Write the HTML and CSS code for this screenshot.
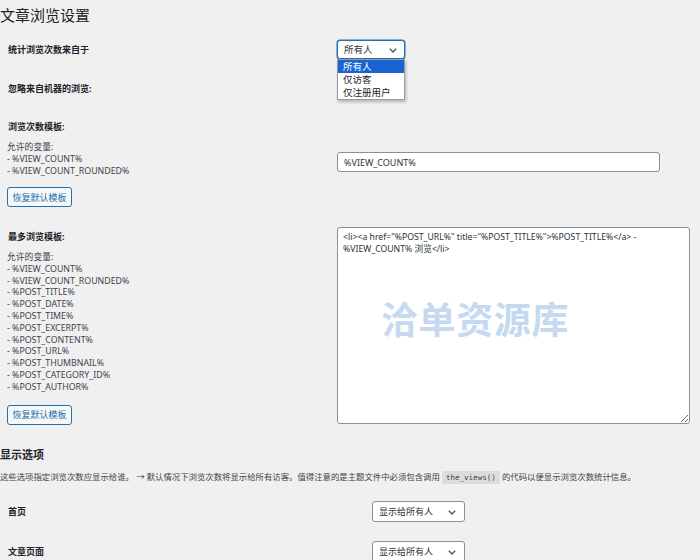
FILE: index.html
```html
<!DOCTYPE html>
<html lang="zh-CN">
<head>
    <meta charset="UTF-8">
    <meta name="viewport" content="width=device-width, initial-scale=1.0">
    <title>文章浏览设置</title>
    <link rel="stylesheet" href="styles.css">
</head>
<body>
    <div class="wrap">
        <h1>文章浏览设置</h1>

        <div class="form">
            <div class="row row-count">
                <div class="th"><span class="label">统计浏览次数来自于</span></div>
                <div class="td">
                    <div class="select-wrap">
                        <div class="select is-open">所有人
                            <svg class="chevron" width="8" height="5" viewBox="0 0 8 5"><path d="M0.8 0.8 L4 4 L7.2 0.8" fill="none" stroke="#50575e" stroke-width="1.4"/></svg>
                        </div>
                        <ul class="dropdown">
                            <li class="active">所有人</li>
                            <li>仅访客</li>
                            <li>仅注册用户</li>
                        </ul>
                    </div>
                </div>
            </div>

            <div class="row row-bots">
                <div class="th"><span class="label">忽略来自机器的浏览:</span></div>
                <div class="td"></div>
            </div>

            <div class="row row-template">
                <div class="th">
                    <span class="label">浏览次数模板:</span>
                    <div class="vars">
                        允许的变量:<br>
                        - %VIEW_COUNT%<br>
                        - %VIEW_COUNT_ROUNDED%
                    </div>
                    <button class="button">恢复默认模板</button>
                </div>
                <div class="td">
                    <input class="text-input" type="text" value="%VIEW_COUNT%">
                </div>
            </div>

            <div class="row row-most">
                <div class="th">
                    <span class="label">最多浏览模板:</span>
                    <div class="vars vars-long">
                        允许的变量:<br>
                        - %VIEW_COUNT%<br>
                        - %VIEW_COUNT_ROUNDED%<br>
                        - %POST_TITLE%<br>
                        - %POST_DATE%<br>
                        - %POST_TIME%<br>
                        - %POST_EXCERPT%<br>
                        - %POST_CONTENT%<br>
                        - %POST_URL%<br>
                        - %POST_THUMBNAIL%<br>
                        - %POST_CATEGORY_ID%<br>
                        - %POST_AUTHOR%
                    </div>
                    <button class="button">恢复默认模板</button>
                </div>
                <div class="td">
                    <div class="area-wrap">
                        <textarea class="textarea">&lt;li&gt;&lt;a href="%POST_URL%" title="%POST_TITLE%"&gt;%POST_TITLE%&lt;/a&gt; -
%VIEW_COUNT% 浏览&lt;/li&gt;</textarea>
                        <div class="watermark">洽单资源库</div>
                    </div>
                </div>
            </div>
        </div>

        <h2>显示选项</h2>
        <p class="desc">这些选项指定浏览次数应显示给谁。 → 默认情况下浏览次数将显示给所有访客。值得注意的是主题文件中必须包含调用 <code>the_views()</code> 的代码以便显示浏览次数统计信息。</p>

        <div class="form form-display">
            <div class="row row-home">
                <div class="th"><span class="label">首页</span></div>
                <div class="td">
                    <div class="select select-wide">显示给所有人
                        <svg class="chevron" width="8" height="5" viewBox="0 0 8 5"><path d="M0.8 0.8 L4 4 L7.2 0.8" fill="none" stroke="#50575e" stroke-width="1.4"/></svg>
                    </div>
                </div>
            </div>
            <div class="row row-single">
                <div class="th"><span class="label">文章页面</span></div>
                <div class="td">
                    <div class="select select-wide">显示给所有人
                        <svg class="chevron" width="8" height="5" viewBox="0 0 8 5"><path d="M0.8 0.8 L4 4 L7.2 0.8" fill="none" stroke="#50575e" stroke-width="1.4"/></svg>
                    </div>
                </div>
            </div>
        </div>
    </div>
</body>
</html>
```

FILE: styles.css
```css
body {
    margin: 0;
    background: #f0f0f1;
    color: #1d2327;
    font-family: "Noto Sans", "Noto Sans CJK SC", sans-serif;
    font-size: 9px;
    overflow: hidden;
}
.wrap {
    padding: 5px 0 0 0;
}
h1 {
    margin: 0;
    font-size: 15px;
    line-height: 20px;
    font-weight: 400;
    color: #1d2327;
}
.form {
    display: flex;
    flex-direction: column;
}
.row {
    display: grid;
    grid-template-columns: 337px 1fr;
}
.th {
    padding-left: 7px;
    display: flex;
    flex-direction: column;
    align-items: flex-start;
}
.label {
    font-weight: 700;
    line-height: 19px;
    padding-left: 1px;
}
.row-count {
    margin-top: 15px;
    position: relative;
    z-index: 2;
}
.row-bots {
    margin-top: 20px;
}
.row-template {
    margin-top: 19px;
}
.row-most {
    margin-top: 20px;
}
.vars {
    margin-top: 5px;
    font-size: 8.8px;
    line-height: 12px;
    color: #3c434a;
}
.vars-long {
    margin-top: 6px;
    line-height: 11.8px;
}
.button {
    margin-top: 10px;
    width: 65px;
    height: 20px;
    padding: 0;
    border: 1px solid #2271b1;
    border-radius: 3px;
    background: #f6f7f7;
    color: #2271b1;
    font-family: inherit;
    font-size: 9px;
}
.row-most .button {
    margin-top: 11px;
}

/* selects */
.select-wrap {
    position: relative;
    width: 68px;
}
.select {
    box-sizing: border-box;
    position: relative;
    height: 19px;
    width: 68px;
    padding-left: 6px;
    line-height: 17px;
    background: #fff;
    border: 1px solid #8c8f94;
    border-radius: 3px;
    color: #2c3338;
    font-size: 9.5px;
}
.select.is-open {
    border-color: #2271b1;
    box-shadow: 0 0 0 0.5px #2271b1;
}
.chevron {
    position: absolute;
    right: 7px;
    top: 7px;
}
.dropdown {
    position: absolute;
    left: 0;
    top: 19px;
    width: 68px;
    box-sizing: border-box;
    margin: 0;
    padding: 0;
    list-style: none;
    background: #fff;
    border: 1px solid #9d9d9d;
    box-shadow: 1px 2px 3px rgba(0, 0, 0, 0.25);
    font-size: 9.5px;
}
.dropdown li {
    height: 13px;
    line-height: 13px;
    padding-left: 5px;
    color: #1d2327;
}
.dropdown li.active {
    background: #1a64d2;
    color: #fff;
}

/* text fields */
.text-input {
    box-sizing: border-box;
    margin: 35px 0 0 0;
    width: 323px;
    height: 20px;
    padding: 0 6px;
    border: 1px solid #8c8f94;
    border-radius: 3px;
    background: #fff;
    color: #2c3338;
    font-family: inherit;
    font-size: 9px;
}
.area-wrap {
    position: relative;
    width: 353px;
}
.textarea {
    display: block;
    box-sizing: border-box;
    width: 353px;
    height: 197px;
    margin: 0;
    padding: 3px 5px;
    border: 1px solid #8c8f94;
    border-radius: 3px;
    background: #fff;
    color: #2c3338;
    font-family: inherit;
    font-size: 8.7px;
    line-height: 12px;
    resize: both;
}
.watermark {
    position: absolute;
    left: 44px;
    top: 73px;
    font-size: 37px;
    line-height: 40px;
    font-weight: 700;
    color: #c5d9f1;
    letter-spacing: 0.6px;
    pointer-events: none;
}

/* display options */
h2 {
    margin: 22px 0 0 0;
    font-size: 11px;
    line-height: 16px;
    font-weight: 700;
}
.desc {
    margin: 7px 0 0 0;
    font-size: 8.4px;
    line-height: 14px;
    color: #3c434a;
    white-space: nowrap;
}
.desc code {
    font-family: "DejaVu Sans Mono", monospace;
    font-size: 7.5px;
    padding: 2px 4px;
    background: #dcdcde;
    color: #3c434a;
}
.form-display .row {
    grid-template-columns: 372px 1fr;
}
.row-home {
    margin-top: 16px;
}
.row-single {
    margin-top: 19px;
}
.form-display .label {
    line-height: 21px;
}
.select-wide {
    width: 93px;
    height: 21px;
    line-height: 19px;
    font-size: 9px;
}
.select-wide .chevron {
    top: 8px;
    right: 8px;
}
```
